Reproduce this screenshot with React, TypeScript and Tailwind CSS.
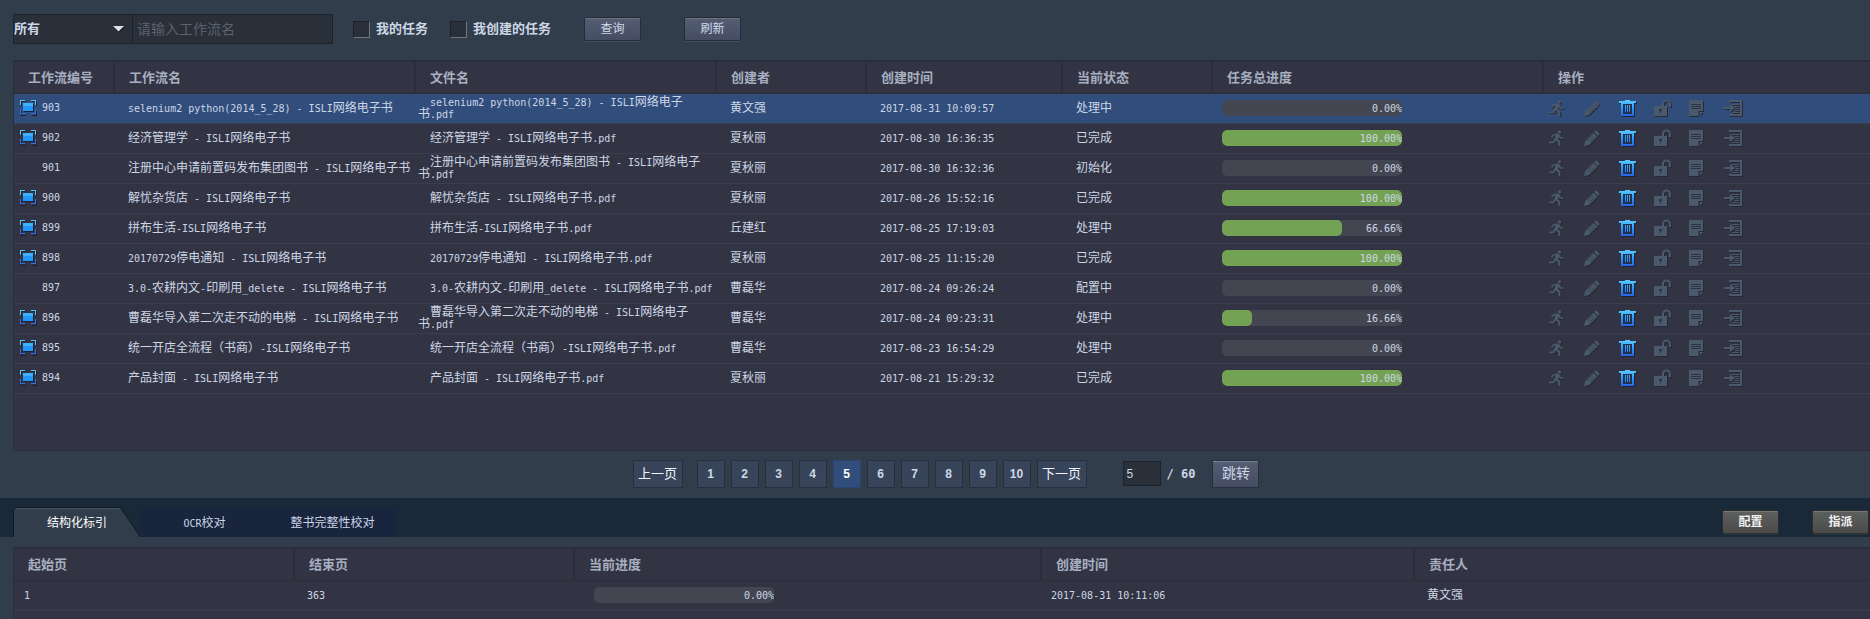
import React from "react";

const LATIN = /([\x20-\x7e]+)/;

function Mixed({ text }: { text: string }) {
  return (
    <>
      {text.split(LATIN).map((part, i) =>
        LATIN.test(part) ? (
          <span key={i} className="text-[10px] leading-none [font-family:'DejaVu_Sans_Mono',monospace]">
            {part}
          </span>
        ) : (
          part
        ),
      )}
    </>
  );
}

type Job = {
  id: string;
  name: string;
  file: string;
  owner: string;
  time: string;
  status: string;
  progress: number;
  monitor: boolean;
};

const jobs: Job[] = [
  { id: "903", name: "selenium2 python(2014_5_28) - ISLI网络电子书", file: "selenium2 python(2014_5_28) - ISLI网络电子书.pdf", owner: "黄文强", time: "2017-08-31 10:09:57", status: "处理中", progress: 0, monitor: true },
  { id: "902", name: "经济管理学 - ISLI网络电子书", file: "经济管理学 - ISLI网络电子书.pdf", owner: "夏秋丽", time: "2017-08-30 16:36:35", status: "已完成", progress: 100, monitor: true },
  { id: "901", name: "注册中心申请前置码发布集团图书 - ISLI网络电子书", file: "注册中心申请前置码发布集团图书 - ISLI网络电子书.pdf", owner: "夏秋丽", time: "2017-08-30 16:32:36", status: "初始化", progress: 0, monitor: false },
  { id: "900", name: "解忧杂货店 - ISLI网络电子书", file: "解忧杂货店 - ISLI网络电子书.pdf", owner: "夏秋丽", time: "2017-08-26 15:52:16", status: "已完成", progress: 100, monitor: true },
  { id: "899", name: "拼布生活-ISLI网络电子书", file: "拼布生活-ISLI网络电子书.pdf", owner: "丘建红", time: "2017-08-25 17:19:03", status: "处理中", progress: 66.66, monitor: true },
  { id: "898", name: "20170729停电通知 - ISLI网络电子书", file: "20170729停电通知 - ISLI网络电子书.pdf", owner: "夏秋丽", time: "2017-08-25 11:15:20", status: "已完成", progress: 100, monitor: true },
  { id: "897", name: "3.0-农耕内文-印刷用_delete - ISLI网络电子书", file: "3.0-农耕内文-印刷用_delete - ISLI网络电子书.pdf", owner: "曹磊华", time: "2017-08-24 09:26:24", status: "配置中", progress: 0, monitor: false },
  { id: "896", name: "曹磊华导入第二次走不动的电梯 - ISLI网络电子书", file: "曹磊华导入第二次走不动的电梯 - ISLI网络电子书.pdf", owner: "曹磊华", time: "2017-08-24 09:23:31", status: "处理中", progress: 16.66, monitor: true },
  { id: "895", name: "统一开店全流程（书商）-ISLI网络电子书", file: "统一开店全流程（书商）-ISLI网络电子书.pdf", owner: "曹磊华", time: "2017-08-23 16:54:29", status: "处理中", progress: 0, monitor: true },
  { id: "894", name: "产品封面 - ISLI网络电子书", file: "产品封面 - ISLI网络电子书.pdf", owner: "夏秋丽", time: "2017-08-21 15:29:32", status: "已完成", progress: 100, monitor: true },
];

function ScreenIcon() {
  return (
    <svg width="17" height="16" viewBox="0 0 17 16" shapeRendering="crispEdges" aria-hidden="true">
      <path d="M1.5 6V1.5H6M12 1.5h4.5V6M1.5 11v4.5H6M12 15.500h4.500V11" stroke="#20232e" fill="none" />
      <path d="M.5 5V.5H5M11 .5h4.500V5" stroke="#55c3fb" fill="none" />
      <path d="M.5 9v4.500H5M11 13.500h4.500V9" stroke="#2c6fe8" fill="none" />
      <rect x="4" y="4" width="10" height="8" fill="#20232e" />
      <rect x="3" y="3" width="10" height="8" fill="#2196fa" />
      <rect x="3" y="3" width="10" height="3" fill="#40b0fd" />
    </svg>
  );
}

function RunShape() {
  return (
    <>
      <circle cx="10.500" cy="1.900" r="1.700" />
      <path d="M4 4.200 8.800 3.400 11 4.900 11.800 7.200 14.500 7.200V8.800H10.900L10 7.100 8.700 9.300 11.200 11.300 11.400 16H9.600L9.300 12.300 6.700 10.500 4.900 13.200H0V11.500H4L6.700 5.600 4.700 5.800 3.300 8 2 7Z" />
    </>
  );
}

function PencilShape() {
  return (
    <>
      <path d="M12.200.3 15.800 3.900 14 5.900 10.200 2.100ZM9.500 2.900 13.300 6.700 4.900 15 0 16 1.100 11.200Z" />
      <path d="M9.300 5.200 3.600 10.900M11 6.800 5.300 12.500" stroke="#2e3b4b" strokeWidth=".8" fill="none" />
    </>
  );
}

function UnlockShape() {
  return (
    <>
      <path d="M0 6H13V16H0Z" />
      <path d="M9 6.500V4A3.500 3.500 0 0 1 16 4V7" stroke="currentColor" strokeWidth="2" fill="none" />
      <path d="M5 9H8V11H7V13.500H6V11H5Z" fill="#2b3644" />
    </>
  );
}

function NoteShape() {
  return (
    <>
      <path d="M0 0H14V11H9.500V16H0ZM11 12H14L11 15.500Z" />
      <path d="M2 4.500H12M2 6.500H12M2 8.500H12" stroke="#2b3442" fill="none" />
    </>
  );
}

function ImportShape() {
  return (
    <>
      <path d="M5 0H18V16H5V14H16V2H5Z" />
      <path d="M0 7H6V4L11 8 6 12V9H0Z" />
      <path d="M8 4.500H15M10.500 6.500H15M11.500 8.500H15M10.500 10.500H15M8 12.500H15" stroke="currentColor" fill="none" />
    </>
  );
}

function TrashIcon() {
  return (
    <svg width="18" height="17" viewBox="0 0 18 17" className="overflow-visible drop-shadow-[1px_1px_0_#20232e]" aria-hidden="true">
      <defs>
        <linearGradient id="bin" x1="0" y1="0" x2="0" y2="16" gradientUnits="userSpaceOnUse">
          <stop offset="0" stopColor="#5ccbff" />
          <stop offset=".5" stopColor="#2b9dfb" />
          <stop offset="1" stopColor="#2962ea" />
        </linearGradient>
      </defs>
      <path fill="#26304a" d="M4 4H13V14H4Z" />
      <path fill="url(#bin)" fillRule="evenodd" d="M6 0H11V1H17V3H15V16H2V3H0V1H6ZM4 4V14H13V4Z" />
      <path fill="url(#bin)" d="M6 5H7V12H6ZM8 5H9V12H8ZM10 5H11V12H10Z" />
    </svg>
  );
}

function Dim({ label, children }: { label: string; children: React.ReactNode }) {
  return (
    <button type="button" aria-label={label} className="flex h-[17px] w-[18px]">
      <svg width="18" height="17" viewBox="0 0 18 17" fill="currentColor" className="overflow-visible drop-shadow-[1px_1px_0_#272a36]" aria-hidden="true">
        {children}
      </svg>
    </button>
  );
}

function Actions() {
  return (
    <div className="flex items-center gap-[17px] pl-[6px] text-[#4a596b]">
      <Dim label="运行"><RunShape /></Dim>
      <Dim label="编辑"><PencilShape /></Dim>
      <button type="button" aria-label="删除" className="flex h-[17px] w-[18px]"><TrashIcon /></button>
      <Dim label="解锁"><UnlockShape /></Dim>
      <Dim label="备注"><NoteShape /></Dim>
      <Dim label="导入"><ImportShape /></Dim>
    </div>
  );
}

function Progress({ value }: { value: number }) {
  return (
    <div className="relative h-4 w-[180px] overflow-hidden rounded-[5px] bg-[#434651]">
      <div className="h-full rounded-[5px] bg-[#74a254]" style={{ width: `${value}%` }} />
      <span className="absolute inset-0 text-right leading-4">
        <Mixed text={`${value.toFixed(2)}%`} />
      </span>
    </div>
  );
}

function Head({ labels }: { labels: string[] }) {
  return (
    <thead>
      <tr className="h-8 border-t-2 border-b border-[#2b2d3a]">
        {labels.map((label, i) => (
          <th
            key={label}
            scope="col"
            className={`${i < labels.length - 1 ? "border-r-2" : ""} border-[#2b2d3a] p-0 pl-[14px] text-left text-[13px] font-bold text-[#a7afc0]`}
          >
            {label}
          </th>
        ))}
      </tr>
    </thead>
  );
}

const blueButton =
  "h-6 w-[57px] rounded-[2px] border border-[#262d39] bg-linear-to-b from-[#555d73] to-[#454d64] text-[12px] text-[#cfd9e8] shadow-[inset_0_1px_0_#6a7288,0_1px_0_#3f4c59]";
const greyButton =
  "h-6 w-[57px] rounded-[2px] border border-[#2b2d2f] bg-linear-to-b from-[#5e5f5f] to-[#4a4b4a] text-[12px] font-bold text-[#f0f0f0] shadow-[inset_0_1px_0_#777777,0_1px_0_#26383f]";
const pageButton =
  "h-7 w-7 border border-[#28303d] bg-[#38445a] text-[12px] font-bold text-[#cdd8e8]";
const stepButton =
  "h-7 w-[50px] border border-[#28303d] bg-[#38445a] text-[13px] text-[#f0f4fa]";
const checkBox =
  "h-[17px] w-[17px] appearance-none border border-t-[#1c222c] border-l-[#1c222c] border-r-[#70757b] border-b-[#70757b] bg-[#293039]";

export default function App() {
  return (
    <div className="min-h-screen overflow-x-hidden bg-[#313d4a] text-[12px] text-[#cdd6e6] [font-family:'Liberation_Sans','Noto_Sans_CJK_SC',sans-serif]">
      <form className="flex h-[60px] items-start pt-[14px] pl-[13px]">
        <div className="flex h-[30px] w-[320px] border border-[#1c222c] bg-[#293039]">
          <div className="relative w-[119px] border-r border-[#1c222c]">
            <select aria-label="范围" className="h-full w-full appearance-none bg-transparent text-[13px] font-bold outline-none">
              <option>所有</option>
            </select>
            <svg className="pointer-events-none absolute top-[11px] right-[7px]" width="12" height="7" viewBox="0 0 12 7" aria-hidden="true">
              <path d="M0 1H12L6 7Z" fill="#161b23" />
              <path d="M0 0H11L5.500 5.500Z" fill="#dbe3ef" />
            </svg>
          </div>
          <input aria-label="工作流名" placeholder="请输入工作流名" className="min-w-0 flex-1 bg-transparent pl-1 text-[14px] outline-none placeholder:text-[#5b626d]" />
        </div>
        <label className="ml-5 flex h-[30px] items-center gap-[6px] text-[13px] font-bold">
          <input type="checkbox" className={checkBox} />
          我的任务
        </label>
        <label className="ml-[22px] flex h-[30px] items-center gap-[6px] text-[13px] font-bold">
          <input type="checkbox" className={checkBox} />
          我创建的任务
        </label>
        <div className="ml-[33px] flex h-[30px] items-center gap-[43px]">
          <button type="button" className={blueButton}>查询</button>
          <button type="button" className={blueButton}>刷新</button>
        </div>
      </form>

      <section className="ml-[13px] min-h-[391px] border-b border-l border-[#2b2d3a] bg-[#323443]">
        <table className="w-full table-fixed border-collapse">
          <colgroup>
            <col className="w-[100px]" />
            <col className="w-[301px]" />
            <col className="w-[301px]" />
            <col className="w-[150px]" />
            <col className="w-[196px]" />
            <col className="w-[150px]" />
            <col className="w-[331px]" />
            <col />
          </colgroup>
          <Head labels={["工作流编号", "工作流名", "文件名", "创建者", "创建时间", "当前状态", "任务总进度", "操作"]} />
          <tbody>
            {jobs.map((job, i) => (
              <tr key={job.id} className={`h-[30px] border-b border-[#3b3e4d] ${i === 0 ? "bg-[#304d7b]" : ""}`}>
                <td className="p-0 pl-[6px]">
                  <div className="flex items-center gap-[5px]">
                    <span className="w-[17px]">{job.monitor && <ScreenIcon />}</span>
                    <Mixed text={job.id} />
                  </div>
                </td>
                <td className="p-0 pl-[14px] whitespace-nowrap"><Mixed text={job.name} /></td>
                <td className="p-0 pl-[3px] indent-[12px] leading-3"><Mixed text={job.file} /></td>
                <td className="p-0 pl-[14px]">{job.owner}</td>
                <td className="p-0 pl-[14px]"><Mixed text={job.time} /></td>
                <td className="p-0 pl-[14px]">{job.status}</td>
                <td className="p-0 pl-[10px]"><Progress value={job.progress} /></td>
                <td className="p-0"><Actions /></td>
              </tr>
            ))}
          </tbody>
        </table>
      </section>

      <nav aria-label="分页" className="flex h-[47px] items-center justify-center gap-[6px] pb-[2px] pl-[22px]">
        <button type="button" className={`${stepButton} mr-2`}>上一页</button>
        {[1, 2, 3, 4, 5, 6, 7, 8, 9, 10].map((n) => (
          <button
            key={n}
            type="button"
            aria-current={n === 5 ? "page" : undefined}
            className={n === 5 ? "h-7 w-7 border border-[#2b4573] bg-[#304d7c] text-[12px] font-bold text-white" : pageButton}
          >
            {n}
          </button>
        ))}
        <button type="button" className={stepButton}>下一页</button>
        <input aria-label="页码" defaultValue="5" className="ml-[30px] h-[25px] w-[38px] border border-[#1c222c] bg-[#293039] pl-[3px] text-[12px] outline-none" />
        <span className="[font-family:'DejaVu_Sans_Mono',monospace] text-[12px] font-bold">/ 60</span>
        <button type="button" className="ml-[11px] h-7 w-[47px] border border-[#28303d] bg-linear-to-b from-[#555d73] to-[#454d64] text-[14px] shadow-[inset_0_1px_0_#7a8090]">跳转</button>
      </nav>

      <div className="flex h-[39px] items-end justify-between bg-[#192938] pr-px pl-[13px]">
        <div role="tablist" className="flex h-[30px]">
          <button type="button" role="tab" aria-selected="true" className="relative h-[30px] w-[128px] pt-[2px]">
            <svg className="absolute inset-0" width="128" height="30" viewBox="0 0 128 30" aria-hidden="true">
              <path d="M.5 30V2.500L2.500.5H107.500L127.500 30Z" fill="#313d4a" />
              <path d="M.5 30V2.500L2.500.5H107.500L127.500 30" fill="none" stroke="#0e1a26" />
              <path d="M3 1.500H107" stroke="#46525f" />
            </svg>
            <span className="relative text-white">结构化标引</span>
          </button>
          <button type="button" role="tab" aria-selected="false" className="h-[30px] w-[127px] bg-[#18253d] pt-[2px]"><Mixed text="OCR校对" /></button>
          <button type="button" role="tab" aria-selected="false" className="h-[30px] w-[129px] bg-[#18253d] pt-[2px]">整书完整性校对</button>
        </div>
        <div className="flex h-[30px] items-center gap-[33px]">
          <button type="button" className={greyButton}>配置</button>
          <button type="button" className={greyButton}>指派</button>
        </div>
      </div>

      <section className="mt-[10px] ml-[13px] min-h-[72px] border-l border-[#2b2d3a] bg-[#323443]">
        <table className="w-full table-fixed border-collapse">
          <colgroup>
            <col className="w-[280px]" />
            <col className="w-[280px]" />
            <col className="w-[467px]" />
            <col className="w-[373px]" />
            <col />
          </colgroup>
          <Head labels={["起始页", "结束页", "当前进度", "创建时间", "责任人"]} />
          <tbody>
            <tr className="h-[30px] border-b border-[#3b3e4d]">
              <td className="p-0 pl-[10px]"><Mixed text="1" /></td>
              <td className="p-0 pl-[13px]"><Mixed text="363" /></td>
              <td className="p-0 pl-5"><Progress value={0} /></td>
              <td className="p-0 pl-[10px]"><Mixed text="2017-08-31 10:11:06" /></td>
              <td className="p-0 pl-[13px]">黄文强</td>
            </tr>
          </tbody>
        </table>
      </section>
    </div>
  );
}
